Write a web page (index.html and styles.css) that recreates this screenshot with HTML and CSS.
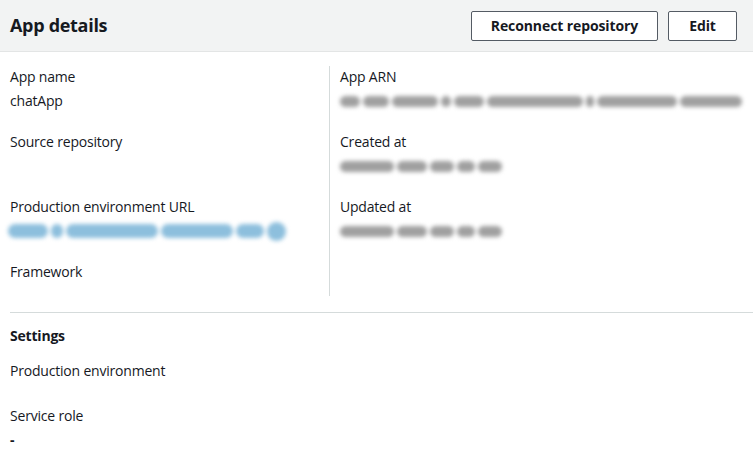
FILE: index.html
```html
<!DOCTYPE html>
<html>
<head>
<meta charset="utf-8">
<link rel="stylesheet" href="styles.css">
</head>
<body>
<div class="panel">
  <div class="header">
    <h2 class="title">App details</h2>
    <div class="actions">
      <button class="btn">Reconnect repository</button>
      <button class="btn btn-edit">Edit</button>
    </div>
  </div>
  <div class="details">
    <div class="col col-left">
      <div class="group">
        <div class="label">App name</div>
        <div class="value">chatApp</div>
      </div>
      <div class="group">
        <div class="label">Source repository</div>
        <div class="value"></div>
      </div>
      <div class="group">
        <div class="label">Production environment URL</div>
        <div class="value">
          <span class="blur blue">
            <i class="s" style="width:40px"></i><i class="s" style="width:12px"></i><i class="s" style="width:92px"></i><i class="s" style="width:72px"></i><i class="s" style="width:28px"></i><i class="s dot"></i>
          </span>
        </div>
      </div>
      <div class="group last">
        <div class="label">Framework</div>
      </div>
    </div>
    <div class="col col-right">
      <div class="group">
        <div class="label">App ARN</div>
        <div class="value">
          <span class="blur gray">
            <i class="s" style="width:20px"></i><i class="s" style="width:26px"></i><i class="s" style="width:46px"></i><i class="s" style="width:10px"></i><i class="s" style="width:30px"></i><i class="s" style="width:96px"></i><i class="s" style="width:8px"></i><i class="s" style="width:80px"></i><i class="s" style="width:62px"></i>
          </span>
        </div>
      </div>
      <div class="group">
        <div class="label">Created at</div>
        <div class="value">
          <span class="blur gray">
            <i class="s" style="width:54px"></i><i class="s" style="width:30px"></i><i class="s" style="width:24px"></i><i class="s" style="width:18px"></i><i class="s" style="width:24px"></i>
          </span>
        </div>
      </div>
      <div class="group">
        <div class="label">Updated at</div>
        <div class="value">
          <span class="blur gray">
            <i class="s" style="width:54px"></i><i class="s" style="width:30px"></i><i class="s" style="width:24px"></i><i class="s" style="width:18px"></i><i class="s" style="width:24px"></i>
          </span>
        </div>
      </div>
    </div>
  </div>
  <div class="settings">
    <div class="settings-title">Settings</div>
    <div class="label">Production environment</div>
    <div class="label role-label">Service role</div>
    <div class="value dash">-</div>
  </div>
</div>
</body>
</html>
```
FILE: styles.css
```css
* { box-sizing: border-box; }
html, body { margin: 0; padding: 0; background: #fff; }
body {
  font-family: "Open Sans", "Noto Sans", sans-serif;
  font-size: 14px;
  letter-spacing: -0.2px;
  color: #16191f;
}
.panel { width: 753px; }
.header {
  height: 52px;
  background: #f2f3f3;
  border-bottom: 1px solid #e3e5e5;
  display: flex;
  align-items: center;
  justify-content: space-between;
  padding: 0 16px 0 10px;
}
.title {
  margin: 0;
  font-size: 18px;
  font-weight: 700;
  letter-spacing: -0.3px;
  position: relative;
  top: -1px;
}
.actions { display: flex; gap: 10px; }
.btn {
  height: 30px;
  border: 1px solid #545b64;
  border-radius: 2px;
  background: #fff;
  font-family: inherit;
  font-size: 14px;
  font-weight: 700;
  letter-spacing: -0.1px;
  color: #16191f;
  padding: 0;
  white-space: nowrap;
  width: 187px;
}
.btn-edit { width: 69px; }
.details {
  display: flex;
  padding-top: 14px;
}
.col-left {
  width: 330px;
  padding: 0 10px 13px 10px;
  border-right: 1px solid #d5dbdb;
}
.col-right {
  padding: 0 10px 0 10px;
  flex: 1;
}
.group { margin-bottom: 19px; }
.group.last { margin-bottom: 0; }
.label { line-height: 22px; height: 22px; }
.value { line-height: 22px; height: 22px; margin-top: 2px; display: flex; align-items: center; }
.blur {
  display: flex;
  gap: 3px;
  filter: blur(2px);
  align-items: center;
}
.s {
  display: block;
  height: 11px;
  border-radius: 6px;
}
.gray .s { background: #a0a0a0; }
.blue .s { background: #8dbfdd; height: 14px; border-radius: 7px; }
.blue { margin-left: -2px; }
.blue .dot { width: 19px; height: 19px; border-radius: 10px; }
.dash { font-weight: 700; }
.settings {
  margin: 16px 0 0 10px;
  border-top: 1px solid #d5dbdb;
  padding-top: 12px;
}
.settings-title { font-weight: 700; line-height: 22px; margin-bottom: 13px; }
.role-label { margin-top: 23px; }
```
